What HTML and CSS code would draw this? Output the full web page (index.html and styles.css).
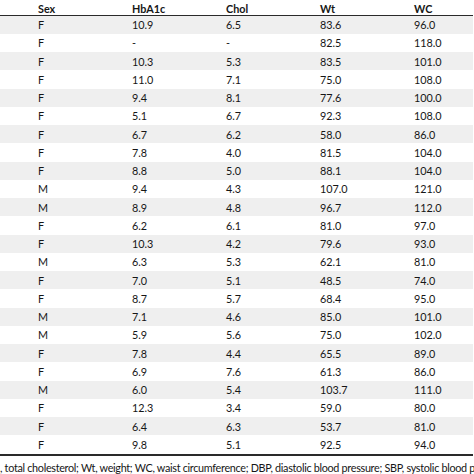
FILE: index.html
```html
<!DOCTYPE html>
<html>
<head>
<meta charset="utf-8">
<link rel="stylesheet" href="styles.css">
</head>
<body>
<div class="table">
  <div class="row head"><span>Sex</span><span>HbA1c</span><span>Chol</span><span>Wt</span><span>WC</span></div>
  <div class="body">
    <div class="row"><span>F</span><span>10.9</span><span>6.5</span><span>83.6</span><span>96.0</span></div>
    <div class="row"><span>F</span><span>-</span><span>-</span><span>82.5</span><span>118.0</span></div>
    <div class="row"><span>F</span><span>10.3</span><span>5.3</span><span>83.5</span><span>101.0</span></div>
    <div class="row"><span>F</span><span>11.0</span><span>7.1</span><span>75.0</span><span>108.0</span></div>
    <div class="row"><span>F</span><span>9.4</span><span>8.1</span><span>77.6</span><span>100.0</span></div>
    <div class="row"><span>F</span><span>5.1</span><span>6.7</span><span>92.3</span><span>108.0</span></div>
    <div class="row"><span>F</span><span>6.7</span><span>6.2</span><span>58.0</span><span>86.0</span></div>
    <div class="row"><span>F</span><span>7.8</span><span>4.0</span><span>81.5</span><span>104.0</span></div>
    <div class="row"><span>F</span><span>8.8</span><span>5.0</span><span>88.1</span><span>104.0</span></div>
    <div class="row"><span>M</span><span>9.4</span><span>4.3</span><span>107.0</span><span>121.0</span></div>
    <div class="row"><span>M</span><span>8.9</span><span>4.8</span><span>96.7</span><span>112.0</span></div>
    <div class="row"><span>F</span><span>6.2</span><span>6.1</span><span>81.0</span><span>97.0</span></div>
    <div class="row"><span>F</span><span>10.3</span><span>4.2</span><span>79.6</span><span>93.0</span></div>
    <div class="row"><span>M</span><span>6.3</span><span>5.3</span><span>62.1</span><span>81.0</span></div>
    <div class="row"><span>F</span><span>7.0</span><span>5.1</span><span>48.5</span><span>74.0</span></div>
    <div class="row"><span>F</span><span>8.7</span><span>5.7</span><span>68.4</span><span>95.0</span></div>
    <div class="row"><span>M</span><span>7.1</span><span>4.6</span><span>85.0</span><span>101.0</span></div>
    <div class="row"><span>M</span><span>5.9</span><span>5.6</span><span>75.0</span><span>102.0</span></div>
    <div class="row"><span>F</span><span>7.8</span><span>4.4</span><span>65.5</span><span>89.0</span></div>
    <div class="row"><span>F</span><span>6.9</span><span>7.6</span><span>61.3</span><span>86.0</span></div>
    <div class="row"><span>M</span><span>6.0</span><span>5.4</span><span>103.7</span><span>111.0</span></div>
    <div class="row"><span>F</span><span>12.3</span><span>3.4</span><span>59.0</span><span>80.0</span></div>
    <div class="row"><span>F</span><span>6.4</span><span>6.3</span><span>53.7</span><span>81.0</span></div>
    <div class="row"><span>F</span><span>9.8</span><span>5.1</span><span>92.5</span><span>94.0</span></div>
  </div>
</div>
<p class="note">, total cholesterol; Wt, weight; WC, waist circumference; DBP, diastolic blood pressure; SBP, systolic blood p</p>
</body>
</html>
```

FILE: styles.css
```css
html, body {
  margin: 0;
  padding: 0;
  background: #fff;
}
body {
  width: 474px;
  height: 474px;
  overflow: hidden;
  font-family: Lato, "Open Sans", sans-serif;
  font-size: 10.8px;
  color: #161616;
}
.table {
  width: 473px;
}
.row {
  display: grid;
  grid-template-columns: 94px 94px 94px 94px 1fr;
  padding-left: 38px;
  height: 18.25px;
  align-items: center;
  white-space: nowrap;
}
.head {
  height: 15.5px;
  font-weight: bold;
  border-bottom: 1.5px solid #2a2a2a;
  align-items: start;
  padding-top: 1.5px;
  box-sizing: border-box;
}
.body {
  border-bottom: 2px solid #2a2a2a;
}
.body .row:nth-child(odd) {
  background: #efefef;
}
.note {
  margin: 5px 0 0 0;
  white-space: nowrap;
  overflow: hidden;
  line-height: 14px;
  font-size: 10.8px;
  letter-spacing: -0.3px;
}
```
